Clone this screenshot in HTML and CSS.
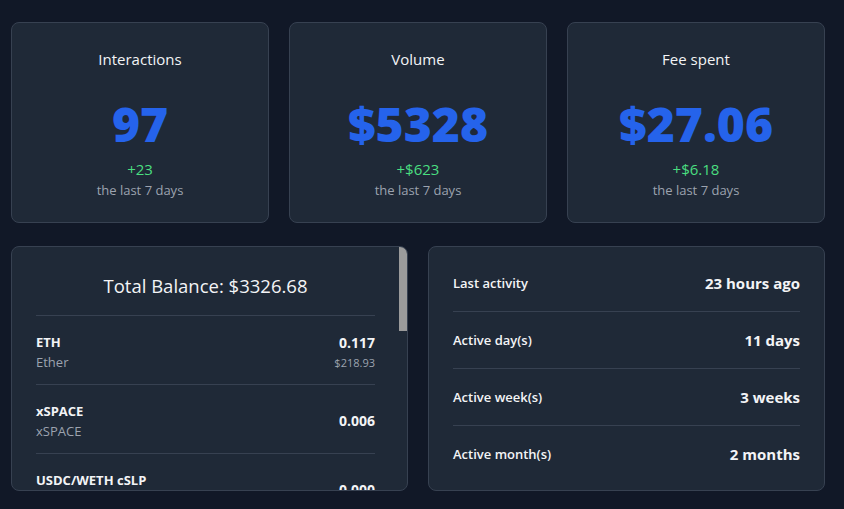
FILE: index.html
```html
<!DOCTYPE html>
<html lang="en">
<head>
    <meta charset="UTF-8">
    <meta name="viewport" content="width=device-width, initial-scale=1.0">
    <title>Wallet stats</title>
    <link rel="stylesheet" href="styles.css">
</head>
<body>
    <div class="page">
        <!-- top stat cards -->
        <div class="stats">
            <div class="card stat">
                <div class="stat-title">Interactions</div>
                <div class="stat-value">97</div>
                <div class="stat-change">+23</div>
                <div class="stat-desc">the last 7 days</div>
            </div>
            <div class="card stat">
                <div class="stat-title">Volume</div>
                <div class="stat-value">$5328</div>
                <div class="stat-change">+$623</div>
                <div class="stat-desc">the last 7 days</div>
            </div>
            <div class="card stat">
                <div class="stat-title">Fee spent</div>
                <div class="stat-value">$27.06</div>
                <div class="stat-change">+$6.18</div>
                <div class="stat-desc">the last 7 days</div>
            </div>
        </div>

        <div class="bottom">
            <!-- token balances -->
            <div class="card balance">
                <div class="balance-scroll">
                    <h2 class="balance-title">Total Balance: $3326.68</h2>
                    <div class="token">
                        <div>
                            <div class="token-symbol">ETH</div>
                            <div class="token-name">Ether</div>
                        </div>
                        <div class="token-right">
                            <div class="token-amount">0.117</div>
                            <div class="token-usd">$218.93</div>
                        </div>
                    </div>
                    <div class="token">
                        <div>
                            <div class="token-symbol">xSPACE</div>
                            <div class="token-name">xSPACE</div>
                        </div>
                        <div class="token-right">
                            <div class="token-amount">0.006</div>
                        </div>
                    </div>
                    <div class="token">
                        <div>
                            <div class="token-symbol">USDC/WETH cSLP</div>
                            <div class="token-name">USDC/WETH cSLP</div>
                        </div>
                        <div class="token-right">
                            <div class="token-amount">0.000</div>
                        </div>
                    </div>
                </div>
                <!-- scrollbar thumb of the token list -->
                <div class="scroll-thumb"></div>
            </div>

            <!-- activity -->
            <div class="card activity">
                <div class="activity-row">
                    <span class="activity-label">Last activity</span>
                    <span class="activity-value">23 hours ago</span>
                </div>
                <div class="activity-row">
                    <span class="activity-label">Active day(s)</span>
                    <span class="activity-value">11 days</span>
                </div>
                <div class="activity-row">
                    <span class="activity-label">Active week(s)</span>
                    <span class="activity-value">3 weeks</span>
                </div>
                <div class="activity-row">
                    <span class="activity-label">Active month(s)</span>
                    <span class="activity-value">2 months</span>
                </div>
            </div>
        </div>
    </div>
</body>
</html>
```

FILE: styles.css
```css
body {
    font-family: 'Open Sans', 'Noto Sans', sans-serif;
    background-color: #111827;
    color: #f3f4f6;
    margin: 0;
    padding: 0;
}
.page {
    padding: 22px 19px 0 11px;
}
.card {
    background-color: #1f2937;
    border: 1px solid #374151;
    border-radius: 8px;
    box-sizing: border-box;
}
.stats {
    display: grid;
    grid-template-columns: repeat(3, 1fr);
    gap: 20px;
}
.stat {
    height: 201px;
    display: flex;
    flex-direction: column;
    align-items: center;
    padding-top: 24px;
}
.stat-title {
    font-size: 15px;
    line-height: 24px;
}
.stat-value {
    font-size: 48px;
    font-weight: 800;
    color: #2563eb;
    line-height: 60px;
    margin-top: 23px;
}
.stat-change {
    font-size: 15px;
    line-height: 22px;
    color: #4ade80;
    margin-top: 4px;
}
.stat-desc {
    font-size: 13px;
    line-height: 20px;
    color: #9ca3af;
}
.bottom {
    display: grid;
    grid-template-columns: 1fr 1fr;
    gap: 20px;
    margin-top: 23px;
}
.balance {
    position: relative;
    height: 245px;
    overflow: hidden;
}
.balance-scroll {
    height: 100%;
    overflow: hidden;
    padding: 0 32px 0 24px;
    box-sizing: border-box;
}
.scroll-thumb {
    position: absolute;
    top: 0;
    right: 0;
    width: 8px;
    height: 84px;
    background-color: #9b9b9b;
}
.balance-title {
    font-size: 18.5px;
    font-weight: 400;
    text-align: center;
    margin: 0;
    padding: 25px 0 15px;
    line-height: 28px;
    border-bottom: 1px solid #374151;
}
.token {
    display: flex;
    justify-content: space-between;
    align-items: center;
    padding: 16px 0 12px;
    border-bottom: 1px solid #374151;
}
.token-symbol {
    font-size: 13px;
    font-weight: 700;
    line-height: 20px;
}
.token-name {
    font-size: 13px;
    color: #9ca3af;
    line-height: 20px;
}
.token-right {
    text-align: right;
}
.token-amount {
    font-size: 14px;
    font-weight: 700;
    line-height: 22px;
}
.token-usd {
    font-size: 11px;
    color: #9ca3af;
    line-height: 18px;
}
.activity {
    height: 245px;
    padding: 8px 24px;
}
.activity-row {
    display: flex;
    justify-content: space-between;
    align-items: center;
    height: 56px;
    border-bottom: 1px solid #374151;
}
.activity-row:last-child {
    border-bottom: none;
}
.activity-label {
    font-size: 13px;
    font-weight: 600;
}
.activity-value {
    font-size: 15px;
    font-weight: 700;
}
```
